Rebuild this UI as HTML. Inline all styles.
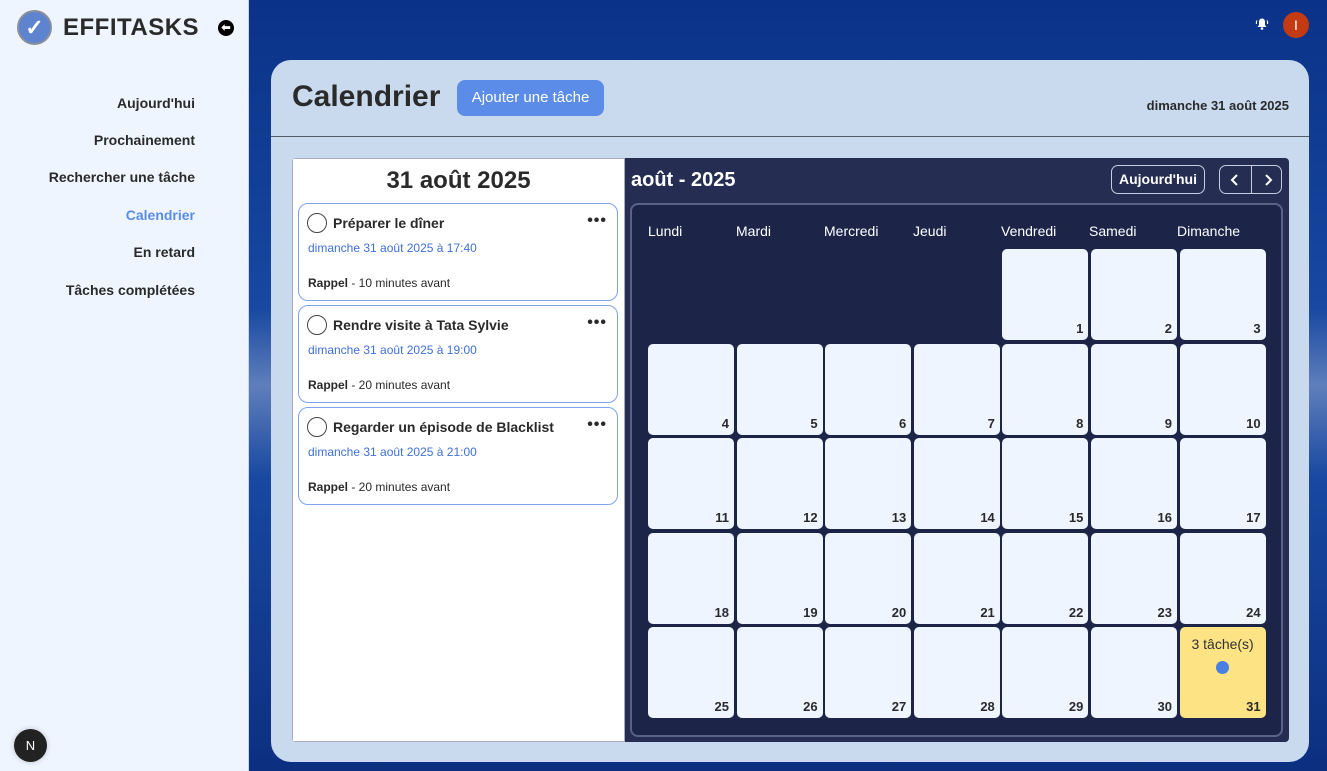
<!DOCTYPE html>
<html><head><meta charset="utf-8"><style>
*{box-sizing:border-box;margin:0;padding:0}
body{width:1327px;height:771px;overflow:hidden;font-family:"Liberation Sans",sans-serif;position:relative;background:linear-gradient(180deg,#0a3288 0%,#1848a0 40%,#5f7fbb 50%,#1848a0 62%,#0c2f80 100%)}
.side{position:absolute;left:0;top:0;width:249px;height:771px;background:#eef5ff;border-right:1px solid #c8d4e8}
.logo{position:absolute;left:17px;top:10px;width:35px;height:35px;border-radius:50%;background:#5f84cf;border:2px solid #8a8f9a;color:#fff;font-size:22px;text-align:center;line-height:31px;font-weight:bold}
.brand{position:absolute;left:63px;top:14px;font-size:24px;font-weight:bold;color:#2a2a2a;letter-spacing:0.5px}
.back{position:absolute;left:218px;top:20px;width:16px;height:16px;border-radius:50%;background:#000;color:#fff;font-size:11px;line-height:16px;text-align:center;font-weight:bold}
.nav{position:absolute;right:53px;font-size:14px;font-weight:bold;color:#2a2a2a;white-space:nowrap;text-align:right}
.nbtn{position:absolute;left:14px;top:729px;width:33px;height:33px;border-radius:50%;background:#222;color:#fff;font-size:13px;text-align:center;line-height:33px;box-shadow:0 0 6px rgba(0,0,0,.2)}
.bell{position:absolute;left:1255px;top:17px}
.av{position:absolute;left:1283px;top:12px;width:26px;height:26px;border-radius:50%;background:#c43a12;color:#fff;text-align:center;line-height:26px;font-size:14px}
.panel{position:absolute;left:271px;top:60px;width:1038px;height:702px;background:#c9d9ee;border-radius:20px}
.title{position:absolute;left:21px;top:20px;font-size:30px;font-weight:bold;color:#2a2a2a}
.add{position:absolute;left:186px;top:20px;width:147px;height:36px;background:#5b8de8;border-radius:8px;color:#fff;font-size:15px;text-align:center;line-height:36px}
.date{position:absolute;right:20px;top:38px;font-size:13px;font-weight:bold;color:#2a2a2a}
.hr{position:absolute;left:0;top:76px;width:1038px;height:1px;background:#555c68}
.box{position:absolute;left:21px;top:98px;width:997px;height:584px;border-radius:4px;overflow:hidden;background:#252e52}
.list{position:absolute;left:0;top:0;width:333px;height:584px;background:#fff;border:1px solid #aab}
.lh{text-align:center;font-size:24px;font-weight:bold;color:#2a2a2a;margin-top:8px}
.card{position:absolute;left:5px;width:320px;height:98px;border:1px solid #7da3ee;border-radius:10px;background:#fff}
.card .c{position:absolute;left:8px;top:9px;width:20px;height:20px;border:1.5px solid #444;border-radius:50%}
.card .t{position:absolute;left:34px;top:11px;font-size:14px;font-weight:bold;color:#2a2a2a}
.card .d{position:absolute;right:10px;top:8px;font-size:16px;font-weight:bold;color:#2a2a2a;letter-spacing:1px}
.card .w{position:absolute;left:9px;top:37px;font-size:12px;color:#3f6fd8}
.card .r{position:absolute;left:9px;top:72px;font-size:12px;color:#2a2a2a}
.mt{position:absolute;left:339px;top:11px;font-size:20px;font-weight:bold;color:#fff}
.tb{position:absolute;left:819px;top:7px;width:94px;height:29px;border:1px solid #c8cce0;border-radius:7px;color:#fff;font-size:14px;font-weight:bold;text-align:center;line-height:27px}
.nv{position:absolute;left:927px;top:7px;width:63px;height:29px;border:1px solid #c8cce0;border-radius:7px;color:#fff;font-size:15px;font-weight:bold}
.grid{position:absolute;left:338px;top:45px;width:653px;height:534px;background:#1c2548;border:2px solid #5a6288;border-radius:8px}
.dn{position:absolute;top:18px;color:#fff;font-size:14px}
.cell{position:absolute;width:86px;height:91px;background:#eef5ff;border-radius:5px}
.cell b{position:absolute;right:5px;bottom:4px;font-size:13px;color:#2a2a2a}
</style></head><body>
<div class="side">
<div class="logo">✓</div><div class="brand">EFFITASKS</div><div class="back">⬅</div>
<div class="nav" style="top:95px">Aujourd'hui</div>
<div class="nav" style="top:132px">Prochainement</div>
<div class="nav" style="top:169px">Rechercher une tâche</div>
<div class="nav" style="top:207px;color:#5b8de8">Calendrier</div>
<div class="nav" style="top:244px">En retard</div>
<div class="nav" style="top:282px">Tâches complétées</div>
<div class="nbtn">N</div>
</div>
<svg class="bell" width="14" height="14" viewBox="0 0 14 14"><path d="M7 1.5C4.8 1.5 4 3.3 4 5v3L2.5 10h9L10 8V5c0-1.7-.8-3.5-3-3.5z" fill="#fff"/><circle cx="7" cy="11.5" r="1.3" fill="#fff"/><path d="M2 3.5Q1 5 1.5 7M12 3.5Q13 5 12.5 7" stroke="#fff" fill="none" stroke-width="1.1"/></svg>
<div class="av">I</div>
<div class="panel">
<div class="title">Calendrier</div><div class="add">Ajouter une tâche</div>
<div class="date">dimanche 31 août 2025</div><div class="hr"></div>
<div class="box">
<div class="list"><div class="lh">31 août 2025</div>
<div class="card" style="top:44px"><div class="c"></div><div class="t">Préparer le dîner</div><div class="d">•••</div><div class="w">dimanche 31 août 2025 à 17:40</div><div class="r"><b>Rappel</b> - 10 minutes avant</div></div>
<div class="card" style="top:146px"><div class="c"></div><div class="t">Rendre visite à Tata Sylvie</div><div class="d">•••</div><div class="w">dimanche 31 août 2025 à 19:00</div><div class="r"><b>Rappel</b> - 20 minutes avant</div></div>
<div class="card" style="top:248px"><div class="c"></div><div class="t">Regarder un épisode de Blacklist</div><div class="d">•••</div><div class="w">dimanche 31 août 2025 à 21:00</div><div class="r"><b>Rappel</b> - 20 minutes avant</div></div>
</div>
<div class="mt">août - 2025</div>
<div class="tb">Aujourd'hui</div>
<div class="nv"><svg style="position:absolute;left:10px;top:8px" width="10" height="12"><path d="M7 1L2 6l5 5" stroke="#fff" stroke-width="2" fill="none"/></svg><div style="position:absolute;left:31px;top:0;width:1px;height:27px;background:#c8cce0"></div><svg style="position:absolute;left:43px;top:8px" width="10" height="12"><path d="M3 1l5 5-5 5" stroke="#fff" stroke-width="2" fill="none"/></svg></div>
<div class="grid" id="g">
<div class="dn" style="left:16px">Lundi</div><div class="dn" style="left:104px">Mardi</div><div class="dn" style="left:192px">Mercredi</div><div class="dn" style="left:281px">Jeudi</div><div class="dn" style="left:369px">Vendredi</div><div class="dn" style="left:457px">Samedi</div><div class="dn" style="left:545px">Dimanche</div>
</div>
</div></div>
<script>
var g=document.getElementById('g');
for(var d=1;d<=31;d++){var i=d+3;var col=i%7,row=Math.floor(i/7);
var e=document.createElement('div');e.className='cell';e.style.left=(16+col*88.6)+'px';e.style.top=(44+row*94.6)+'px';
if(d==31){e.style.background='#fde384';e.innerHTML='<div style="position:absolute;top:9px;width:100%;text-align:center;font-size:14px;color:#333">3 tâche(s)</div><div style="position:absolute;left:36px;top:34px;width:13px;height:13px;border-radius:50%;background:#4a7ee0"></div>';}
e.innerHTML+='<b>'+d+'</b>';g.appendChild(e);}
</script>
</body></html>
